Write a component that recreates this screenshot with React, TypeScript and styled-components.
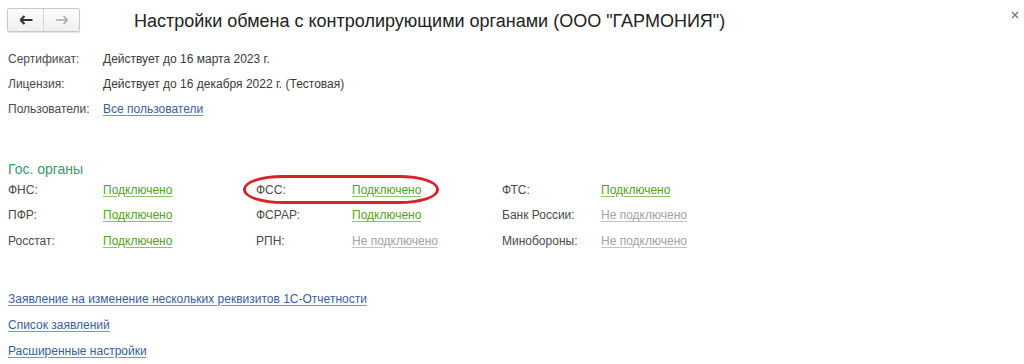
import React from 'react';
import styled, { createGlobalStyle } from 'styled-components';

const GlobalStyle = createGlobalStyle`
  html, body {
    margin: 0;
    padding: 0;
    background: #fff;
  }
  body {
    font-family: "Liberation Sans", Arial, sans-serif;
    font-size: 12px;
    color: #404040;
  }
`;

const Page = styled.div`
  width: 1024px;
  height: 364px;
  position: relative;
  overflow: hidden;
  background: #fff;
`;

const Header = styled.div`
  display: flex;
  align-items: center;
  height: 40px;
  padding: 0 0 0 7px;
`;

const NavGroup = styled.div`
  display: flex;
  height: 22px;
  border: 1px solid #c8c8c8;
  border-radius: 2px;
  background: linear-gradient(#fdfdfd, #f0f0f0);
  box-shadow: 0 1px 1px rgba(0, 0, 0, 0.12);
`;

const NavButton = styled.div<{ $disabled?: boolean }>`
  width: 35px;
  display: flex;
  align-items: center;
  justify-content: center;
  color: ${p => (p.$disabled ? '#a8a8a8' : '#333')};
  & + & {
    border-left: 1px solid #d6d6d6;
  }
`;

const Title = styled.h1`
  margin: 0 0 0 54px;
  font-size: 18px;
  font-weight: normal;
  color: #222;
  flex: 1;
  padding-top: 2px;
`;

const Close = styled.div`
  width: 18px;
  display: flex;
  justify-content: center;
  align-self: flex-start;
  padding-top: 11px;
  color: #777;
`;

const InfoGrid = styled.div`
  display: grid;
  grid-template-columns: 95px auto;
  grid-auto-rows: 25px;
  align-items: center;
  padding: 6px 0 0 8px;
`;

const Label = styled.span`
  color: #4a4a4a;
  white-space: nowrap;
`;

const Value = styled.span`
  color: #3a3a3a;
`;

const BlueLink = styled.a`
  color: #3b5d9c;
  text-decoration: underline;
  text-underline-offset: 2px;
  text-decoration-color: #7a93c4;
  cursor: pointer;
  width: fit-content;
`;

const Section = styled.div`
  padding: 40px 0 0 8px;
`;

const SectionTitle = styled.div`
  color: #3b9a6b;
  font-size: 14px;
  line-height: 16px;
  height: 16px;
`;

const OrgGrid = styled.div`
  display: grid;
  grid-template-columns: 95px 153px 96px 150px 99px auto;
  grid-auto-rows: 25.5px;
  align-items: center;
`;

const StatusLink = styled.a<{ $on?: boolean }>`
  color: ${p => (p.$on ? '#55a024' : '#a2a2a2')};
  text-decoration: underline;
  text-underline-offset: 2px;
  text-decoration-color: ${p => (p.$on ? '#8cc36a' : '#c2c2c2')};
  width: fit-content;
  cursor: pointer;
`;

const Highlight = styled.div`
  position: absolute;
  left: 243px;
  top: 175px;
  width: 196px;
  height: 29px;
  border: 3px solid #d8232a;
  border-radius: 40px / 14px;
  box-sizing: border-box;
  pointer-events: none;
`;

const LinkList = styled.div`
  display: flex;
  flex-direction: column;
  gap: 12px;
  padding: 38px 0 0 8px;
`;

const orgs: [string, boolean][] = [
  ['ФНС:', true], ['ФСС:', true], ['ФТС:', true],
  ['ПФР:', true], ['ФСРАР:', true], ['Банк России:', false],
  ['Росстат:', true], ['РПН:', false], ['Минобороны:', false],
];

export default function App() {
  return (
    <Page>
      <GlobalStyle />
      <Header>
        <NavGroup>
          <NavButton>
            <svg width="14" height="10" viewBox="0 0 14 10">
              <path d="M1.5 5h12M1.5 5l4-4M1.5 5l4 4" stroke="currentColor" strokeWidth="2.2" fill="none" />
            </svg>
          </NavButton>
          <NavButton $disabled>
            <svg width="14" height="10" viewBox="0 0 14 10">
              <path d="M1 5h11.5M12.5 5l-4-4M12.5 5l-4 4" stroke="currentColor" strokeWidth="1.6" fill="none" />
            </svg>
          </NavButton>
        </NavGroup>
        <Title>Настройки обмена с контролирующими органами (ООО "ГАРМОНИЯ")</Title>
        <Close>
          <svg width="8" height="8" viewBox="0 0 8 8">
            <path d="M1 1l6 6M7 1L1 7" stroke="currentColor" strokeWidth="1.3" />
          </svg>
        </Close>
      </Header>

      <InfoGrid>
        <Label>Сертификат:</Label>
        <Value>Действует до 16 марта 2023 г.</Value>
        <Label>Лицензия:</Label>
        <Value>Действует до 16 декабря 2022 г. (Тестовая)</Value>
        <Label>Пользователи:</Label>
        <BlueLink>Все пользователи</BlueLink>
      </InfoGrid>

      <Section>
        <SectionTitle>Гос. органы</SectionTitle>
        <OrgGrid>
          {orgs.map(([name, on]) => (
            <React.Fragment key={name}>
              <Label>{name}</Label>
              <StatusLink $on={on}>{on ? 'Подключено' : 'Не подключено'}</StatusLink>
            </React.Fragment>
          ))}
        </OrgGrid>
      </Section>

      <LinkList>
        <BlueLink>Заявление на изменение нескольких реквизитов 1С-Отчетности</BlueLink>
        <BlueLink>Список заявлений</BlueLink>
        <BlueLink>Расширенные настройки</BlueLink>
      </LinkList>

      <Highlight />
    </Page>
  );
}
